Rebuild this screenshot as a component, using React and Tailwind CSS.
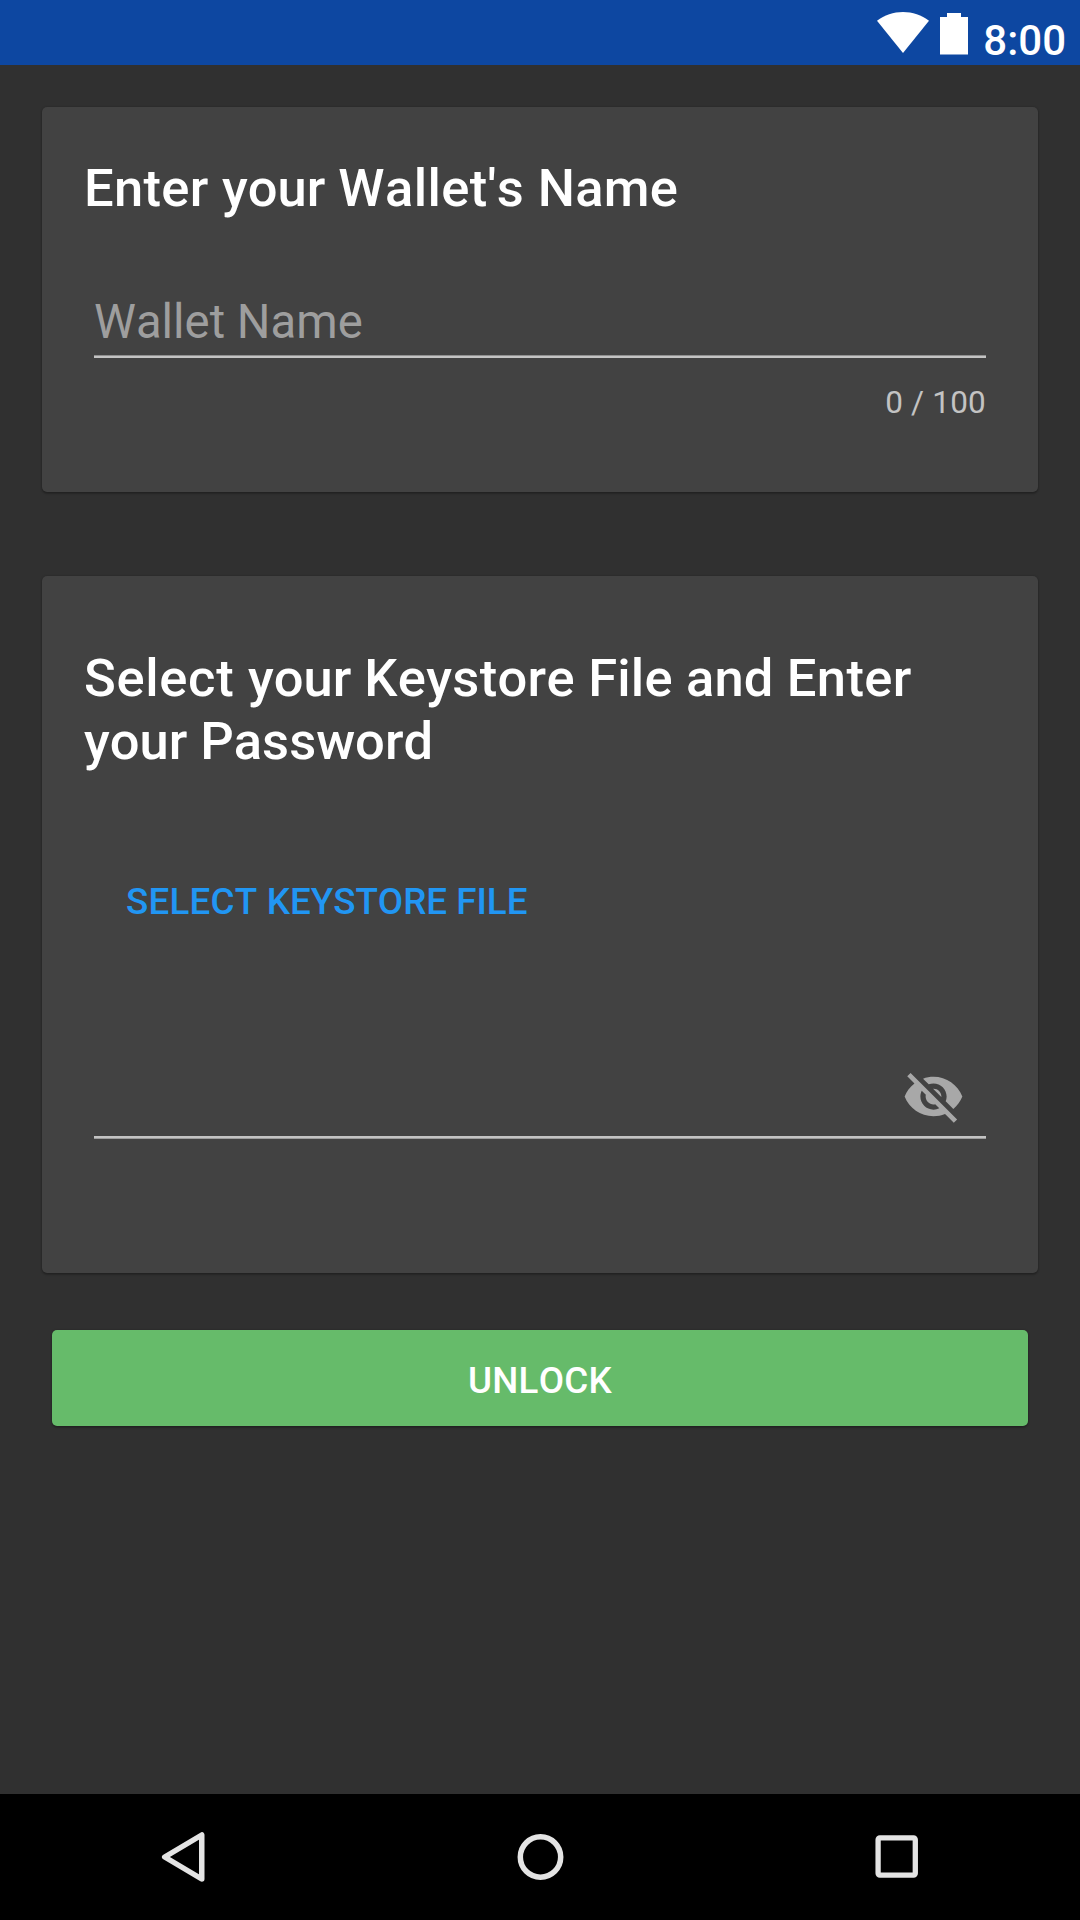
function StatusBar() {
  return (
    <header className="flex h-[65px] shrink-0 justify-end bg-[#0d47a1] pr-[14px] text-white">
      <svg className="mt-[12px] h-[41px] w-[52px]" viewBox="0 0 52 41" fill="currentColor">
        <path d="M26 41 0 8.800C7.400 3 16.500 0 26 0s18.600 3 26 8.800z" />
      </svg>
      <svg className="mt-[13px] ml-[11px] h-[41.5px] w-[28px]" viewBox="0 0 28 41.5" fill="currentColor">
        <path d="M7 0h14v4h7v37.500H0V4h7z" />
      </svg>
      <span className="mt-[16px] ml-[15px] text-[42px] leading-[49px] font-medium">8:00</span>
    </header>
  );
}

function Card({ className, children }) {
  return (
    <section className={`flex flex-col rounded-[5px] bg-[#424242] px-[42px] shadow-[0_2px_2px_rgba(0,0,0,0.22),0_0_2px_rgba(0,0,0,0.3)] ${className}`}>
      {children}
    </section>
  );
}

function EyeOff() {
  return (
    <svg className="h-[63px] w-[63px]" viewBox="0 0 24 24" fill="#a8a8a8">
      <path d="M12 7c2.760 0 5 2.240 5 5 0 .65-.13 1.260-.36 1.830l2.920 2.920c1.510-1.260 2.700-2.890 3.430-4.750-1.730-4.390-6-7.500-11-7.500-1.400 0-2.740.25-3.980.7l2.160 2.160C10.740 7.130 11.350 7 12 7zM2 4.270l2.280 2.280.46.46C3.080 8.300 1.780 10.020 1 12c1.730 4.390 6 7.500 11 7.500 1.550 0 3.030-.3 4.380-.84l.42.42L19.730 22 21 20.730 3.270 3 2 4.270zM7.530 9.800l1.550 1.550c-.05.21-.08.43-.08.65 0 1.660 1.340 3 3 3 .22 0 .44-.03.65-.08l1.550 1.550c-.67.33-1.410.53-2.200.53-2.760 0-5-2.240-5-5 0-.79.2-1.530.53-2.200zm4.310-.78l3.150 3.150.02-.16c0-1.660-1.340-3-3-3l-.17.010z" />
    </svg>
  );
}

function NavBar() {
  return (
    <nav className="flex h-[126px] shrink-0 items-center justify-between bg-black px-[155px] text-[#e4e4e4]">
      <svg className="h-[60px] w-[60px]" viewBox="0 0 60 60" fill="none" stroke="currentColor" strokeWidth="5.5" strokeLinejoin="round">
        <path d="M9.700 30 46.750 8v44z" />
      </svg>
      <svg className="h-[60px] w-[60px]" viewBox="0 0 60 60" fill="none" stroke="currentColor" strokeWidth="5.5">
        <circle cx="30.5" cy="30" r="20.2" />
      </svg>
      <svg className="h-[60px] w-[60px]" viewBox="0 0 60 60" fill="none" stroke="currentColor" strokeWidth="5.3">
        <rect x="13.1" y="10.9" width="37.2" height="37.2" rx="1.8" />
      </svg>
    </nav>
  );
}

export default function App() {
  return (
    <div className="flex h-[1920px] w-[1080px] flex-col bg-[#303030] font-[Roboto,sans-serif] [font-kerning:none]">
      <StatusBar />
      <main className="flex flex-1 flex-col px-[42px] pt-[42px]">
        <Card className="h-[385px] pt-[50px]">
          <h2 className="h-[63px] text-[52.5px] leading-[63px] font-medium whitespace-nowrap text-white">
            <span className="tracking-[0.32px]">Enter </span>
            <span>your </span>
            <span className="tracking-[0.4px]">Wallet's </span>
            <span className="tracking-[0.3px]">Name</span>
          </h2>
          <div className="mx-[10px] mt-[74px] flex flex-col">
            <input
              className="h-[56px] bg-transparent text-[47.25px] leading-[56px] text-white outline-none [font-kerning:none] placeholder:text-[#9e9e9e]"
              placeholder="Wallet Name"
            />
            <div className="mt-[5px] h-[3px] border-t border-[#8f8f8f] bg-[#c3c3c3]" />
            <p className="mt-[26px] self-end text-[31.5px] leading-[37px] tracking-[0.2px] text-[#c3c3c3]">0 / 100</p>
          </div>
        </Card>

        <Card className="mt-[84px] h-[697px] pt-[71px]">
          <h2 className="h-[126px] text-[52.5px] leading-[63px] font-medium whitespace-nowrap text-white">
            <span className="tracking-[0.67px]">Select </span>
            <span>your </span>
            <span className="tracking-[0.32px]">Keystore </span>
            <span className="tracking-[0.15px]">File </span>
            <span className="tracking-[0.2px]">and </span>
            <span className="tracking-[0.35px]">Enter</span>
            <br />
            your Password
          </h2>
          <button className="mt-[107px] self-start pl-[42px] text-[36.75px] leading-[43px] font-medium whitespace-nowrap text-[#2196f3]">
            <span className="tracking-[0.23px]">SELECT </span>KEYSTORE FILE
          </button>
          <div className="mx-[10px] mt-[142px] flex flex-col">
            <div className="flex justify-end pr-[21px]">
              <EyeOff />
            </div>
            <div className="mt-[8px] h-[3px] border-b border-[#9c9c9c] bg-[#c3c3c3]" />
          </div>
        </Card>

        <button className="mx-[10px] mt-[57px] flex h-[96px] justify-center rounded-[5px] bg-[#66bb6a] pt-[29px] text-[36.75px] leading-[43px] font-medium tracking-[0.25px] text-white shadow-[0_2px_2px_rgba(0,0,0,0.22),0_0_2px_rgba(0,0,0,0.3)]">
          UNLOCK
        </button>
      </main>
      <NavBar />
    </div>
  );
}
